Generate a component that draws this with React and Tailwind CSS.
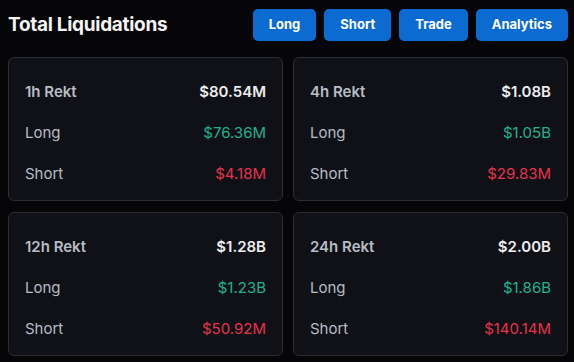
import React from "react";

const cards = [
  { label: "1h Rekt", total: "$80.54M", long: "$76.36M", short: "$4.18M" },
  { label: "4h Rekt", total: "$1.08B", long: "$1.05B", short: "$29.83M" },
  { label: "12h Rekt", total: "$1.28B", long: "$1.23B", short: "$50.92M" },
  { label: "24h Rekt", total: "$2.00B", long: "$1.86B", short: "$140.14M" },
];

function Card({ c }) {
  return (
    <div className="h-[144px] rounded-[6px] border border-[#2b2e35] bg-[#0f1117] px-[16px] pt-[23px] flex flex-col gap-[19px] text-[15px] leading-[22px]">
      <div className="flex justify-between">
        <span className="font-semibold text-[#b8bcc4]">{c.label}</span>
        <span className="font-semibold text-[#ececee]">{c.total}</span>
      </div>
      <div className="flex justify-between">
        <span className="text-[#b8bcc4]">Long</span>
        <span className="text-[#1fb28c]">{c.long}</span>
      </div>
      <div className="flex justify-between">
        <span className="text-[#b8bcc4]">Short</span>
        <span className="text-[#e5334b]">{c.short}</span>
      </div>
    </div>
  );
}

export default function App() {
  return (
    <div
      className="w-[574px] h-[362px] bg-[#060609] px-[8px] pt-[9px] overflow-hidden"
      style={{ fontFamily: "Inter, 'Noto Sans', sans-serif" }}
    >
      <div className="flex items-center justify-between pr-[-2px]">
        <h1 className="text-[19px] font-bold text-[#f4f4f5] tracking-[-0.3px]">Total Liquidations</h1>
        <div className="flex gap-[8px] -mr-[2px]">
          {["Long", "Short", "Trade", "Analytics"].map((b) => (
            <button
              key={b}
              className="h-[32px] px-[16px] rounded-[5px] bg-[#0b6bd0] text-white text-[13px] font-bold"
            >
              {b}
            </button>
          ))}
        </div>
      </div>
      <div className="mt-[16px] grid grid-cols-[275px_275px] gap-x-[10px] gap-y-[11px]">
        {cards.map((c) => (
          <Card key={c.label} c={c} />
        ))}
      </div>
    </div>
  );
}
